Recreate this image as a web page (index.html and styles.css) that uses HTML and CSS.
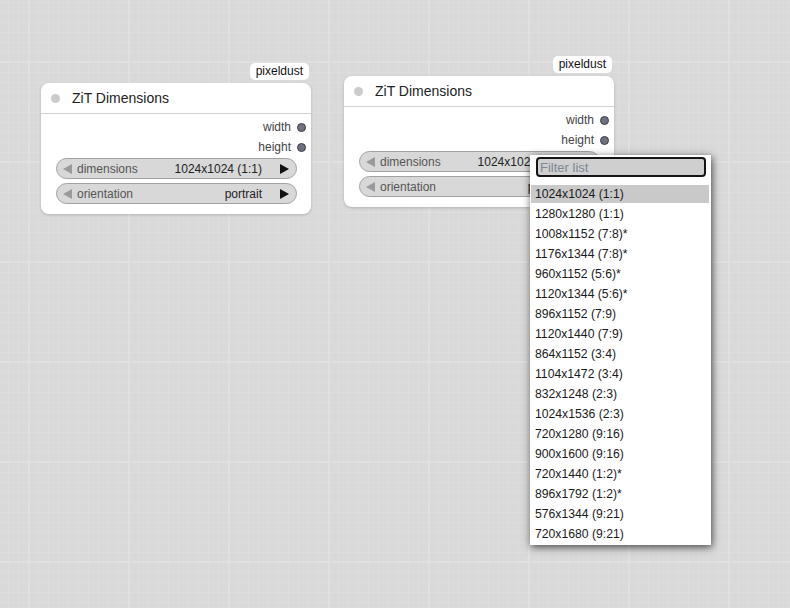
FILE: index.html
```html
<!DOCTYPE html>
<html>
<head>
<meta charset="utf-8">
<title>ZiT Dimensions</title>
<link rel="stylesheet" href="styles.css">
</head>
<body>
<div class="canvas">
  <div class="node node-a">
    <div class="badge">pixeldust</div>
    <div class="title"><span class="title-dot"></span><span class="title-text">ZiT Dimensions</span></div>
    <div class="body">
      <div class="out"><span>width</span><span class="slot"></span></div>
      <div class="out"><span>height</span><span class="slot"></span></div>
      <div class="widgets">
        <div class="widget">
          <svg class="arr arr-l" width="9" height="10" viewBox="0 0 9 10"><polygon points="9,0 9,10 0,5"/></svg>
          <span class="label">dimensions</span>
          <span class="value">1024x1024 (1:1)</span>
          <svg class="arr arr-r" width="9" height="10" viewBox="0 0 9 10"><polygon points="0,0 0,10 9,5"/></svg>
        </div>
        <div class="widget">
          <svg class="arr arr-l" width="9" height="10" viewBox="0 0 9 10"><polygon points="9,0 9,10 0,5"/></svg>
          <span class="label">orientation</span>
          <span class="value">portrait</span>
          <svg class="arr arr-r" width="9" height="10" viewBox="0 0 9 10"><polygon points="0,0 0,10 9,5"/></svg>
        </div>
      </div>
    </div>
  </div>

  <div class="node node-b">
    <div class="badge">pixeldust</div>
    <div class="title"><span class="title-dot"></span><span class="title-text">ZiT Dimensions</span></div>
    <div class="body">
      <div class="out"><span>width</span><span class="slot"></span></div>
      <div class="out"><span>height</span><span class="slot"></span></div>
      <div class="widgets">
        <div class="widget">
          <svg class="arr arr-l" width="9" height="10" viewBox="0 0 9 10"><polygon points="9,0 9,10 0,5"/></svg>
          <span class="label">dimensions</span>
          <span class="value">1024x1024 (1:1)</span>
          <svg class="arr arr-r" width="9" height="10" viewBox="0 0 9 10"><polygon points="0,0 0,10 9,5"/></svg>
        </div>
        <div class="widget">
          <svg class="arr arr-l" width="9" height="10" viewBox="0 0 9 10"><polygon points="9,0 9,10 0,5"/></svg>
          <span class="label">orientation</span>
          <span class="value">portrait</span>
          <svg class="arr arr-r" width="9" height="10" viewBox="0 0 9 10"><polygon points="0,0 0,10 9,5"/></svg>
        </div>
      </div>
    </div>
  </div>

  <div class="menu">
    <input class="filter" type="text" placeholder="Filter list">
    <div class="items">
      <div class="item active">1024x1024 (1:1)</div>
      <div class="item">1280x1280 (1:1)</div>
      <div class="item">1008x1152 (7:8)*</div>
      <div class="item">1176x1344 (7:8)*</div>
      <div class="item">960x1152 (5:6)*</div>
      <div class="item">1120x1344 (5:6)*</div>
      <div class="item">896x1152 (7:9)</div>
      <div class="item">1120x1440 (7:9)</div>
      <div class="item">864x1152 (3:4)</div>
      <div class="item">1104x1472 (3:4)</div>
      <div class="item">832x1248 (2:3)</div>
      <div class="item">1024x1536 (2:3)</div>
      <div class="item">720x1280 (9:16)</div>
      <div class="item">900x1600 (9:16)</div>
      <div class="item">720x1440 (1:2)*</div>
      <div class="item">896x1792 (1:2)*</div>
      <div class="item">576x1344 (9:21)</div>
      <div class="item">720x1680 (9:21)</div>
    </div>
  </div>
</div>
</body>
</html>
```

FILE: styles.css
```css
html, body {
  margin: 0;
  padding: 0;
}

body {
  width: 790px;
  height: 608px;
  overflow: hidden;
  font-family: "Liberation Sans", Arial, sans-serif;
}

.canvas {
  position: relative;
  width: 790px;
  height: 608px;
  background-color: #d9d9d9;
  background-image:
    linear-gradient(to right, #e0e0e0 2px, transparent 2px),
    linear-gradient(to bottom, #e0e0e0 2px, transparent 2px),
    linear-gradient(to right, #dddddd 1px, transparent 1px),
    linear-gradient(to bottom, #dddddd 1px, transparent 1px);
  background-size: 100px 100px, 100px 100px, 10px 10px, 10px 10px;
  background-position: 28px 0, 0 61px, 8px 0, 0 2px;
}

/* ---------- nodes ---------- */
.node {
  position: absolute;
  width: 270px;
  background: #ffffff;
  border-radius: 8px;
  box-shadow: 0 1px 3px rgba(0, 0, 0, 0.18);
}

.node-a { left: 41px; top: 83px; }
.node-b { left: 344px; top: 76px; }

.badge {
  position: absolute;
  right: 2px;
  top: -20px;
  height: 17px;
  line-height: 17px;
  padding: 0 6px;
  background: #ffffff;
  border-radius: 5px;
  font-size: 12px;
  color: #111;
}

.title {
  height: 30px;
  display: flex;
  align-items: center;
  border-bottom: 1px solid #d2d2d2;
  padding-left: 10px;
}

.title-dot {
  width: 9px;
  height: 9px;
  border-radius: 50%;
  background: #cbcbcb;
  margin-right: 12px;
}

.title-text {
  font-size: 14px;
  color: #222;
}

.body {
  padding: 3px 0 10px;
}

.out {
  height: 20px;
  display: flex;
  align-items: center;
  justify-content: flex-end;
  gap: 6px;
  padding-right: 5px;
  font-size: 12px;
  color: #444;
}

.slot {
  width: 9px;
  height: 9px;
  box-sizing: border-box;
  border-radius: 50%;
  background: #6f6f7d;
  border: 1px solid #3d3d48;
}

.widgets {
  margin: 1px 14px 0 15px;
  display: flex;
  flex-direction: column;
  gap: 4px;
}

.widget {
  height: 21px;
  box-sizing: border-box;
  border: 1px solid #a2a2a2;
  border-radius: 11px;
  background: #d8d8d8;
  display: flex;
  align-items: center;
  padding: 0 7px 0 6px;
  font-size: 12px;
}

.arr { flex: none; }
.arr-l { fill: #9a9a9a; margin-right: 5px; }
.arr-r { fill: #111; margin-left: 18px; }

.label {
  color: #555;
  flex: 1;
}

.value {
  color: #222;
}

/* ---------- dropdown menu ---------- */
.menu {
  position: absolute;
  left: 530px;
  top: 155px;
  width: 181px;
  height: 390px;
  box-sizing: border-box;
  background: #ffffff;
  padding: 2px 2px 0 1px;
  box-shadow: 1px 2px 8px rgba(0, 0, 0, 0.7);
  font-family: "Liberation Sans", Arial, sans-serif;
}

.filter {
  display: block;
  box-sizing: border-box;
  margin: 0 0 8px 5px;
  width: 170px;
  height: 20px;
  border: 2px solid #151515;
  border-radius: 4px;
  background: #cfcfcf;
  padding: 0 2px;
  font-family: "Liberation Sans", Arial, sans-serif;
  font-size: 13px;
  color: #222;
  outline: none;
}

.filter::placeholder {
  color: #7c8798;
}

.items {
  display: flex;
  flex-direction: column;
  gap: 2px;
}

.item {
  height: 18px;
  line-height: 18px;
  padding-left: 4px;
  font-size: 12.2px;
  color: #1a1a1a;
  white-space: nowrap;
}

.item.active {
  background: #c9c9c9;
}
```
